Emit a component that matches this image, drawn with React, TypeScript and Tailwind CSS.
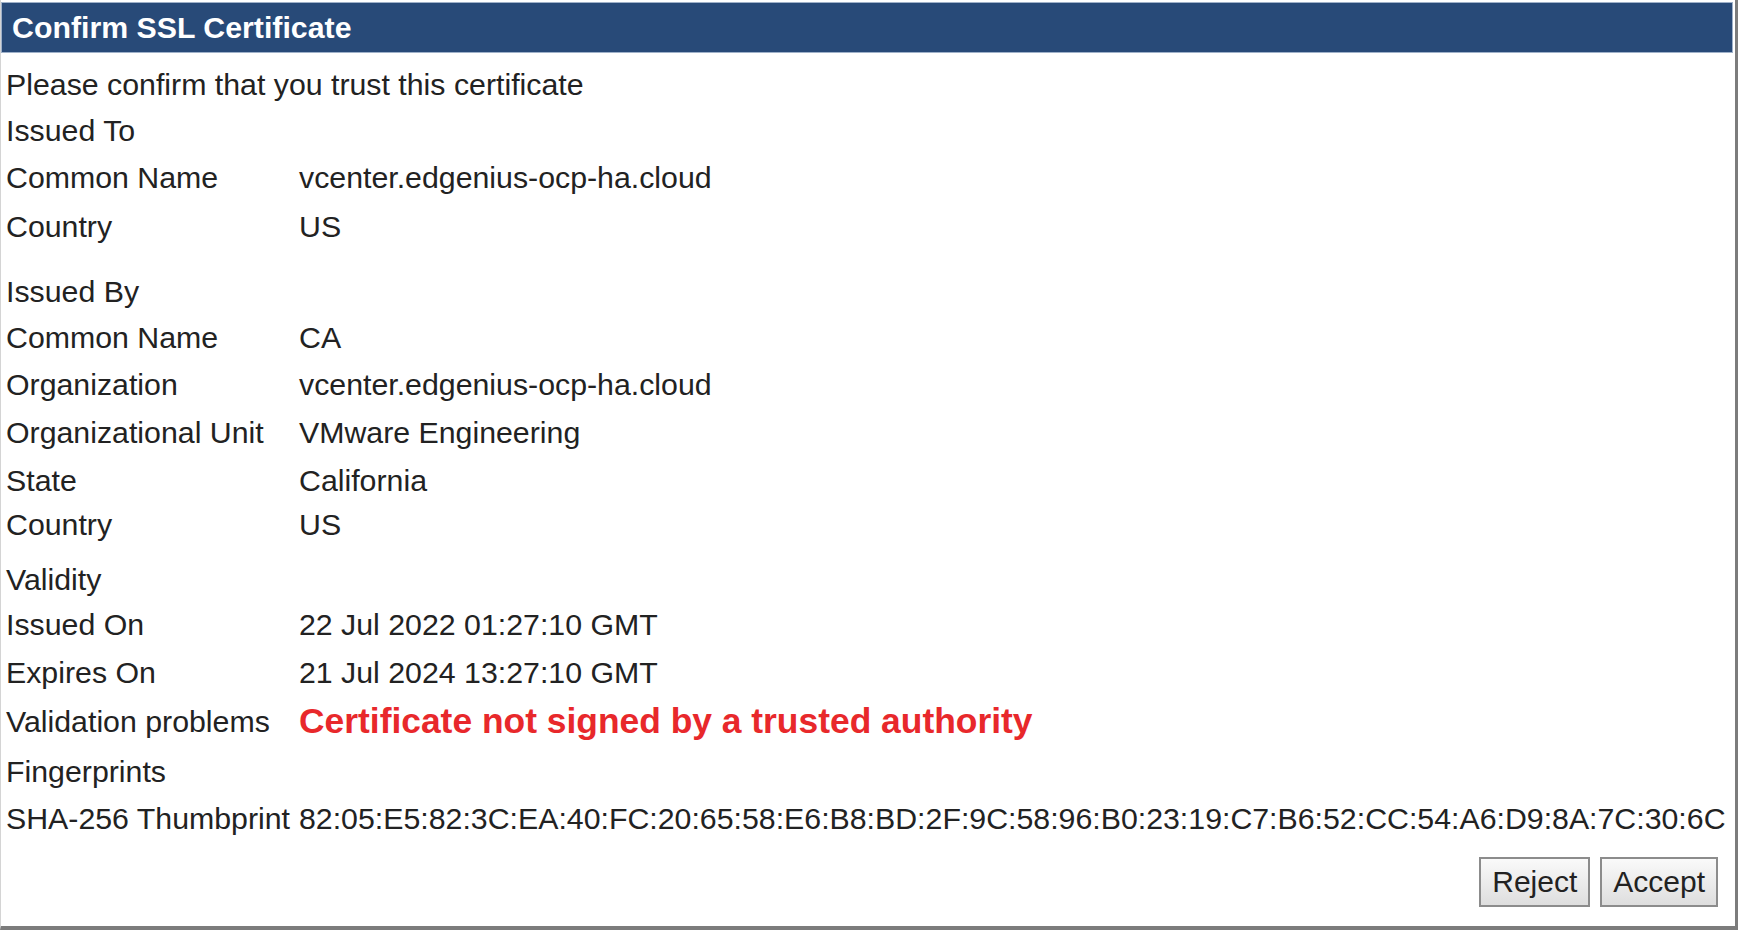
export default function App() {
  // each row: label, value, top margin (px), optional red value
  const rows: { label: string; value?: string; mt: string; red?: boolean }[] = [
    { label: 'Issued To', mt: 'mt-[-1px]' },
    { label: 'Common Name', value: 'vcenter.edgenius-ocp-ha.cloud', mt: 'mt-0' },
    { label: 'Country', value: 'US', mt: 'mt-[2px]' },
    { label: 'Issued By', mt: 'mt-[18px]' },
    { label: 'Common Name', value: 'CA', mt: 'mt-[-1px]' },
    { label: 'Organization', value: 'vcenter.edgenius-ocp-ha.cloud', mt: 'mt-0' },
    { label: 'Organizational Unit', value: 'VMware Engineering', mt: 'mt-[1px]' },
    { label: 'State', value: 'California', mt: 'mt-[1px]' },
    { label: 'Country', value: 'US', mt: 'mt-[-3px]' },
    { label: 'Validity', mt: 'mt-[8px]' },
    { label: 'Issued On', value: '22 Jul 2022 01:27:10 GMT', mt: 'mt-[-2px]' },
    { label: 'Expires On', value: '21 Jul 2024 13:27:10 GMT', mt: 'mt-[1px]' },
    { label: 'Validation problems', value: 'Certificate not signed by a trusted authority', mt: 'mt-[2px]', red: true },
    { label: 'Fingerprints', mt: 'mt-[3px]' },
    {
      label: 'SHA-256 Thumbprint',
      value: '82:05:E5:82:3C:EA:40:FC:20:65:58:E6:B8:BD:2F:9C:58:96:B0:23:19:C7:B6:52:CC:54:A6:D9:8A:7C:30:6C',
      mt: 'mt-0',
    },
  ];

  return (
    <div
      className="w-[1738px] h-[930px] bg-white overflow-hidden text-[#222] text-[30.3px]"
      style={{ fontFamily: '"Liberation Sans", Arial, sans-serif' }}
    >
      <div className="h-full flex flex-col border-l border-[#d4d4d4] border-r-[3px] border-b-[4px] border-r-[#7c7c7c] border-b-[#7c7c7c] pt-[2px] pr-[2px]">
        {/* title bar */}
        <div className="h-[51px] shrink-0 bg-[#284a78] border border-[#9fb1c9] flex items-center pl-[10px]">
          <span className="text-white font-bold leading-none mt-[1px]">Confirm SSL Certificate</span>
        </div>

        <div className="mt-[8px] h-[47px] flex items-center pl-[5px] leading-[47px] whitespace-nowrap">
          Please confirm that you trust this certificate
        </div>

        {rows.map((r, i) => (
          <div key={i} className={`${r.mt} h-[47px] flex items-center whitespace-nowrap leading-[47px]`}>
            <div className="w-[298px] shrink-0 pl-[5px]">{r.label}</div>
            {r.value && (
              <div className={r.red ? 'text-[#e8282b] font-bold text-[35.4px]' : ''}>{r.value}</div>
            )}
          </div>
        ))}

        {/* buttons */}
        <div className="mt-[15px] flex justify-end gap-[10px] pr-[15px]">
          <button className="h-[50px] px-[11px] border-2 border-[#8c8c8c] bg-gradient-to-b from-[#fafafa] to-[#dedede] text-[#222] text-[30px] leading-none">
            Reject
          </button>
          <button className="h-[50px] px-[11px] border-2 border-[#8c8c8c] bg-gradient-to-b from-[#fafafa] to-[#dedede] text-[#222] text-[30px] leading-none">
            Accept
          </button>
        </div>
      </div>
    </div>
  );
}
